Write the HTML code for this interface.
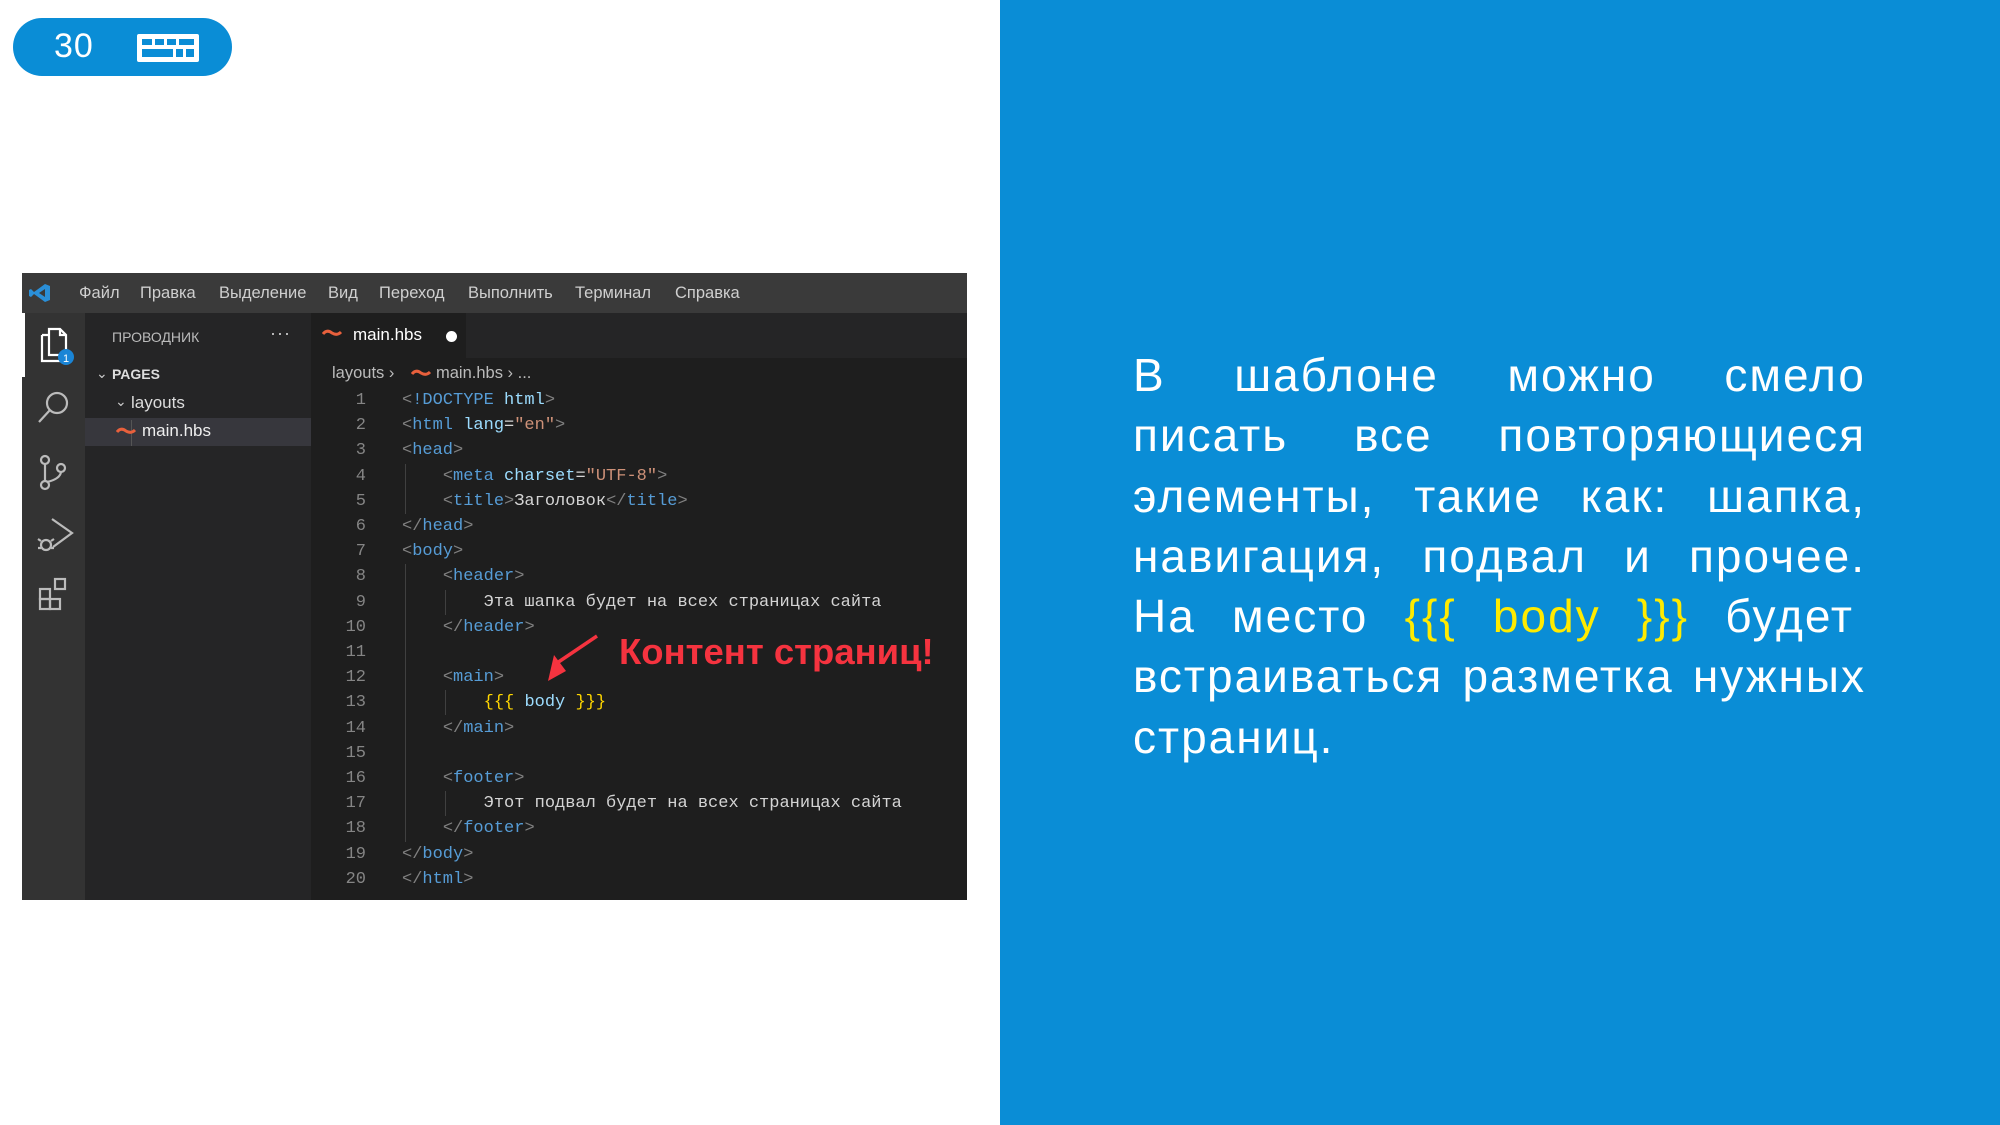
<!DOCTYPE html>
<html><head><meta charset="utf-8"><style>
*{margin:0;padding:0;box-sizing:border-box}
body{width:2000px;height:1125px;overflow:hidden;background:#fff;position:relative;font-family:"Liberation Sans",sans-serif}
.abs{position:absolute}
#blue{left:1000px;top:0;width:1000px;height:1125px;background:#0a8dd6}
#badge{left:13px;top:18px;width:219px;height:58px;border-radius:29px;background:#0a8dd6}
#ed{left:22px;top:273px;width:945px;height:627px;background:#1e1e1e;overflow:hidden}
.menu{position:absolute;top:11px;font-size:16.5px;color:#cfcfcf}
.code{position:absolute;left:380px;font-family:"Liberation Mono",monospace;font-size:17px;color:#d4d4d4;white-space:pre;line-height:25.2px}
.ln{position:absolute;left:278px;width:66px;text-align:right;font-family:"Liberation Mono",monospace;font-size:17px;color:#858585;line-height:25.2px;white-space:pre}
.t{color:#569cd6}.g{color:#808080}.a{color:#9cdcfe}.s{color:#ce9178}.y{color:#ffd700}.w{color:#e6e6e6}
.txt{position:absolute;left:1133px;width:733px;color:#fff;font-size:46px;line-height:60.3px;letter-spacing:2px}
.row{display:flex;justify-content:space-between;height:60.3px;white-space:nowrap}
.gd{position:absolute;width:1px;background:#404040}
</style></head><body>
<div id="blue" class="abs"></div>
<div id="badge" class="abs">
 <div class="abs" style="left:41px;top:9px;font-size:34px;color:#fff;letter-spacing:1px">30</div>
 <svg class="abs" style="left:124px;top:16px" width="62" height="28" viewBox="0 0 62 28">
  <rect x="0" y="0" width="62" height="28" rx="2" fill="#fff"/>
  <g fill="#0a8dd6"><rect x="5" y="5" width="10" height="6"/><rect x="18" y="5" width="9" height="6"/><rect x="30" y="5" width="9" height="6"/><rect x="42" y="5" width="15" height="6"/>
  <rect x="5" y="15" width="31" height="8"/><rect x="39" y="15" width="7" height="8"/><rect x="49" y="15" width="8" height="8"/></g>
 </svg>
</div>

<div id="ed" class="abs">
 <div class="abs" style="left:0;top:0;width:945px;height:40px;background:#3a3a3a"></div>
 <svg class="abs" style="left:7px;top:10px" width="22" height="20" viewBox="0 0 22 20"><path d="M16 1 L21 3 V17 L16 19 L5 11 L2 14 L0 13 V7 L2 6 L5 9 Z M16 6 L10 10 L16 14 Z" fill="#2a8fd8"/></svg>
 <div class="menu" style="left:57px">Файл</div>
 <div class="menu" style="left:118px">Правка</div>
 <div class="menu" style="left:197px">Выделение</div>
 <div class="menu" style="left:306px">Вид</div>
 <div class="menu" style="left:357px">Переход</div>
 <div class="menu" style="left:446px">Выполнить</div>
 <div class="menu" style="left:553px">Терминал</div>
 <div class="menu" style="left:653px">Справка</div>

 <div class="abs" style="left:0;top:40px;width:63px;height:587px;background:#333"></div>
 <div class="abs" style="left:0;top:40px;width:3px;height:64px;background:#fff"></div>
 <svg class="abs" style="left:0;top:40px" width="63" height="400" viewBox="0 0 63 400" fill="none" stroke="#bbb" stroke-width="2.2">
  <g stroke="#fff"><path d="M20 22 H27 M20 22 V48 H38 V42"/><path d="M27 16 H38 L44 22 V42 H27 Z"/><path d="M38 16 V22 H44"/></g>
  <circle cx="44" cy="44" r="8" fill="#1a85d6" stroke="none"/>
  <text x="44" y="49" font-size="11" fill="#fff" stroke="none" text-anchor="middle" font-family="Liberation Sans">1</text>
  <circle cx="35" cy="90" r="10"/><path d="M28 97 L17 109"/>
  <circle cx="23" cy="147" r="4"/><circle cx="23" cy="172" r="4"/><circle cx="39" cy="155" r="4"/><path d="M23 151 V168 M39 159 Q38 166 25 169"/>
  <path d="M30 206 L50 220 L31 234"/><circle cx="24" cy="232" r="5"/><path d="M19 228 L16 226 M29 228 L32 226 M19 235 H16 M29 235 H32"/>
  <rect x="18" y="276" width="10" height="10"/><rect x="18" y="286" width="10" height="10"/><rect x="28" y="286" width="10" height="10"/><rect x="33" y="266" width="10" height="10"/>
 </svg>

 <div class="abs" style="left:63px;top:40px;width:226px;height:587px;background:#252526"></div>
 <div class="abs" style="left:90px;top:56px;font-size:14px;color:#bbb">ПРОВОДНИК</div>
 <div class="abs" style="left:248px;top:50px;font-size:18px;color:#ccc;letter-spacing:1px">···</div>
 <div class="abs" style="left:74px;top:92px;font-size:14px;color:#ccc">⌄</div>
 <div class="abs" style="left:90px;top:93px;font-size:14px;font-weight:bold;color:#ddd">PAGES</div>
 <div class="abs" style="left:93px;top:120px;font-size:14px;color:#ccc">⌄</div>
 <div class="abs" style="left:109px;top:120px;font-size:17px;color:#ddd">layouts</div>
 <div class="abs" style="left:63px;top:145px;width:226px;height:28px;background:#37373d"></div>
 <div class="abs" style="left:109px;top:147px;width:1px;height:26px;background:#555"></div>
 <svg class="abs" style="left:94px;top:154px" width="20" height="8" viewBox="0 0 20 8"><path d="M1 5 Q5 0 10 4 Q15 7 19 3" stroke="#e8603c" stroke-width="3" fill="none"/></svg>
 <div class="abs" style="left:120px;top:148px;font-size:17px;color:#eee">main.hbs</div>

 <div class="abs" style="left:289px;top:40px;width:656px;height:45px;background:#252526"></div>
 <div class="abs" style="left:289px;top:40px;width:155px;height:45px;background:#1e1e1e"></div>
 <svg class="abs" style="left:300px;top:56px" width="20" height="8" viewBox="0 0 20 8"><path d="M1 5 Q5 0 10 4 Q15 7 19 3" stroke="#e8603c" stroke-width="3" fill="none"/></svg>
 <div class="abs" style="left:331px;top:52px;font-size:17px;color:#fff">main.hbs</div>
 <div class="abs" style="left:424px;top:58px;width:11px;height:11px;border-radius:50%;background:#fff"></div>
 <div class="abs" style="left:310px;top:91px;font-size:16.5px;color:#bbb">layouts ›</div>
 <svg class="abs" style="left:389px;top:96px" width="20" height="8" viewBox="0 0 20 8"><path d="M1 5 Q5 0 10 4 Q15 7 19 3" stroke="#e8603c" stroke-width="3" fill="none"/></svg>
 <div class="abs" style="left:414px;top:91px;font-size:16.5px;color:#bbb">main.hbs › ...</div>

 <div class="ln" style="top:115px">1
2
3
4
5
6
7
8
9
10
11
12
13
14
15
16
17
18
19
20</div>
 <div class="gd" style="left:383px;top:191px;height:50px"></div>
 <div class="gd" style="left:383px;top:291px;height:278px"></div>
 <div class="gd" style="left:423px;top:317px;height:25px"></div>
 <div class="gd" style="left:423px;top:417px;height:25px"></div>
 <div class="gd" style="left:423px;top:518px;height:25px"></div>
 <div class="code" style="top:115px"><span class="g">&lt;</span><span class="t">!DOCTYPE</span> <span class="a">html</span><span class="g">&gt;</span>
<span class="g">&lt;</span><span class="t">html</span> <span class="a">lang</span>=<span class="s">"en"</span><span class="g">&gt;</span>
<span class="g">&lt;</span><span class="t">head</span><span class="g">&gt;</span>
    <span class="g">&lt;</span><span class="t">meta</span> <span class="a">charset</span>=<span class="s">"UTF-8"</span><span class="g">&gt;</span>
    <span class="g">&lt;</span><span class="t">title</span><span class="g">&gt;</span>Заголовок<span class="g">&lt;/</span><span class="t">title</span><span class="g">&gt;</span>
<span class="g">&lt;/</span><span class="t">head</span><span class="g">&gt;</span>
<span class="g">&lt;</span><span class="t">body</span><span class="g">&gt;</span>
    <span class="g">&lt;</span><span class="t">header</span><span class="g">&gt;</span>
        Эта шапка будет на всех страницах сайта
    <span class="g">&lt;/</span><span class="t">header</span><span class="g">&gt;</span>

    <span class="g">&lt;</span><span class="t">main</span><span class="g">&gt;</span>
        <span class="y">{{{</span> <span class="a">body</span> <span class="y">}}}</span>
    <span class="g">&lt;/</span><span class="t">main</span><span class="g">&gt;</span>

    <span class="g">&lt;</span><span class="t">footer</span><span class="g">&gt;</span>
        Этот подвал будет на всех страницах сайта
    <span class="g">&lt;/</span><span class="t">footer</span><span class="g">&gt;</span>
<span class="g">&lt;/</span><span class="t">body</span><span class="g">&gt;</span>
<span class="g">&lt;/</span><span class="t">html</span><span class="g">&gt;</span></div>
 <div class="abs" style="left:597px;top:358px;font-size:36.5px;font-weight:bold;color:#f5333f;white-space:nowrap">Контент страниц!</div>
 <svg class="abs" style="left:500px;top:360px" width="100" height="60" viewBox="0 0 100 60"><path d="M75 3 L35 30" stroke="#f5333f" stroke-width="3.5"/><path d="M26 48 L32 22 L44 38 Z" fill="#f5333f"/></svg>
</div>

<div class="txt" style="top:345px">
 <div class="row"><span>В</span><span>шаблоне</span><span>можно</span><span>смело</span></div>
 <div class="row"><span>писать</span><span>все</span><span>повторяющиеся</span></div>
 <div class="row"><span>элементы,</span><span>такие</span><span>как:</span><span>шапка,</span></div>
 <div class="row"><span>навигация,</span><span>подвал</span><span>и</span><span>прочее.</span></div>
 <div class="row" style="padding-right:12px"><span>На</span><span>место</span><span style="color:#ffeb00">{{{</span><span style="color:#ffeb00">body</span><span style="color:#ffeb00">}}}</span><span>будет</span></div>
 <div class="row"><span>встраиваться</span><span>разметка</span><span>нужных</span></div>
 <div class="row"><span>страниц.</span></div>
</div>
</body></html>
